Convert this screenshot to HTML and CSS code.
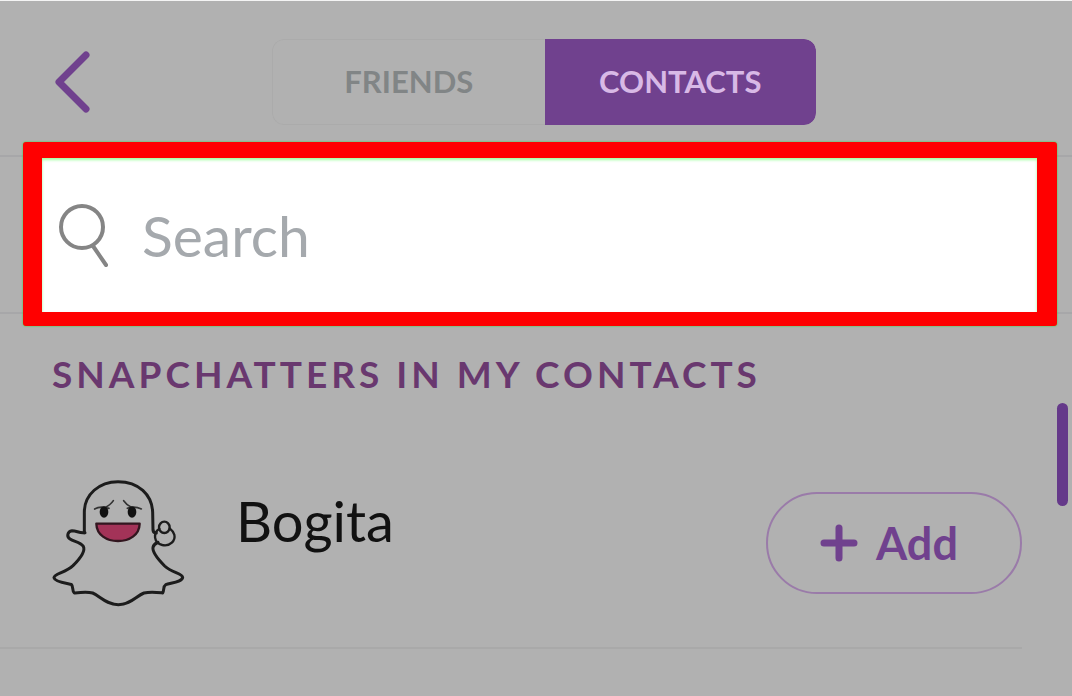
FILE: index.html
```html
<!DOCTYPE html>
<html lang="en">
<head>
  <meta charset="UTF-8" />
  <meta name="viewport" content="width=device-width, initial-scale=1.0"/>
  <title>Contacts</title>
  <link rel="stylesheet" href="styles.css">
</head>

<body>

  <header class="top-bar">
    <button class="back-button" type="button" aria-label="Back">
      <svg viewBox="0 0 38 64" class="back-icon">
        <path d="M33 5 L6 32 L33 59" />
      </svg>
    </button>
    <nav class="tabs">
      <button class="tab" type="button">FRIENDS</button>
      <button class="tab tab-active" type="button">CONTACTS</button>
    </nav>
  </header>

  <!-- Search row with the red highlight frame -->
  <div class="search-row">
    <label class="search-box">
      <svg viewBox="0 0 50 64" class="search-icon">
        <circle cx="24" cy="24" r="21" />
        <path d="M35 43 L48 62" />
      </svg>
      <input class="search-input" type="text" placeholder="Search" aria-label="Search" />
    </label>
  </div>

  <main class="contacts">
    <h2 class="section-title">SNAPCHATTERS IN MY CONTACTS</h2>

    <div class="contact">
      <svg viewBox="60 54 408 390" class="avatar">
        <!-- body -->
        <path class="line" d="M163 218 V157 C163 103 208 65 264 65 C326 65 366 104 368 157 L369 210 Q370 219 379 219" />
        <path class="line" d="M165 218 C148 221 141 212 126 212 C112 214 109 230 120 237 C133 245 151 246 160 259 C168 275 143 303 129 317 C106 339 73 341 72 353 C74 366 112 370 124 373 C131 380 125 391 133 399 C149 397 171 394 188 399 C211 409 229 434 265 434 C302 434 318 408 342 399 C363 394 382 397 398 399 C403 390 399 379 407 374 C426 368 457 365 458 352 C457 340 425 338 404 318 C390 304 366 279 369 262 C371 252 377 250 384 247" />
        <!-- hand -->
        <path class="line hand" d="M388 206 C369 219 370 248 397 255 C421 260 437 241 433 224 C431 215 424 209 419 205" />
        <ellipse class="line hand" cx="403" cy="202" rx="16" ry="17" />
        <!-- face -->
        <path class="brow" d="M194 147 Q210 137 237 145 M223 143 Q241 136 250 122 M281 122 Q291 136 304 142 M292 145 Q314 137 334 147" />
        <ellipse class="eye" cx="222" cy="156" rx="13" ry="17" />
        <ellipse class="eye" cx="306" cy="156" rx="13" ry="17" />
        <path class="mouth" d="M199 191 H329 C328 225 298 243 264 243 C230 243 200 225 199 191 Z" />
      </svg>
      <span class="name">Bogita</span>
      <button class="add-button" type="button">
        <svg viewBox="0 0 38 38" class="plus-icon">
          <path d="M19 4 V34 M4 19 H34" />
        </svg>
        Add
      </button>
    </div>
  </main>

  <div class="scroll-thumb"></div>

</body>
</html>
```
FILE: styles.css
```css
:root {
  --bg-color: #b1b1b1;
  --line-color: #a7a7a9;
  --purple: #70418e;
  --frame-color: #ff0000;
}

* {
  box-sizing: border-box;
}

body {
  margin: 0;
  min-height: 100vh;
  position: relative;
  border-top: 1px solid #f4f4f4;
  background-color: var(--bg-color);
  font-family: Lato, sans-serif;
  color: #111111;
}

button {
  border: none;
  background: none;
  padding: 0;
  font-family: inherit;
  cursor: pointer;
}

svg {
  display: block;
  fill: none;
  stroke-linecap: round;
  stroke-linejoin: round;
}

/* Top bar */
.top-bar {
  display: grid;
  grid-template-columns: 1fr 544px 1fr;
  align-items: center;
  padding: 38px 0 30px;
  border-bottom: 2px solid var(--line-color);
}

.back-button {
  justify-self: start;
  margin-left: 53px;
}

.back-icon {
  width: 38px;
  height: 64px;
  stroke: var(--purple);
  stroke-width: 7;
}

.tabs {
  display: flex;
  margin: 0 -8px 0 8px;
  border-radius: 12px;
  overflow: hidden;
}

.tab {
  flex: 1;
  height: 86px;
  padding-bottom: 2px;
  border: 1px solid #ababab;
  border-right: none;
  border-radius: 12px 0 0 12px;
  font-size: 31px;
  font-weight: 700;
  color: #818586;
}

.tab-active {
  border: none;
  border-radius: 0 12px 12px 0;
  background-color: var(--purple);
  color: #d8b9e6;
}

/* Search */
.search-row {
  border-bottom: 2px solid var(--line-color);
}

.search-box {
  position: relative;
  display: flex;
  align-items: center;
  gap: 34px;
  height: 184px;
  margin: -15px 15px -14px 23px;
  padding-left: 16px;
  border: 18px solid var(--frame-color);
  border-width: 16px 20px 14px 19px;
  border-radius: 3px;
  background-color: #ffffff;
  box-shadow: 0 0 2px #20e020, inset 0 2px 3px #a0ffa0;
}

.search-icon {
  width: 50px;
  height: 64px;
  stroke: #858585;
  stroke-width: 4;
}

.search-input {
  flex: 1;
  min-width: 0;
  padding: 0;
  border: none;
  outline: none;
  background: none;
  font-family: inherit;
  font-size: 57px;
  color: #111111;
}

.search-input::placeholder {
  color: #a5a9ad;
  opacity: 1;
}

/* Contact list */
.contacts {
  padding-top: 38px;
}

.section-title {
  margin: 0;
  padding-left: 52px;
  font-size: 37px;
  line-height: 44px;
  font-weight: 700;
  letter-spacing: 4px;
  color: #69386f;
}

.contact {
  display: flex;
  align-items: center;
  margin-right: 50px;
  padding: 82px 0 39px 50px;
  border-bottom: 2px solid #a9a9a9;
}

.avatar {
  width: 136px;
  height: 130px;
}

.line {
  stroke: #1c1c1c;
  stroke-width: 9;
}

.hand {
  stroke-width: 7;
}

.brow {
  stroke: #333333;
  stroke-width: 5;
}

.eye {
  fill: #111111;
}

.mouth {
  fill: #a33358;
  stroke: #32161f;
  stroke-width: 7;
}

.name {
  flex: 1;
  padding: 0 0 44px 50px;
  font-size: 56px;
  line-height: 64px;
}

.add-button {
  display: flex;
  align-items: center;
  justify-content: center;
  gap: 18px;
  width: 256px;
  height: 102px;
  padding-right: 10px;
  border: 2px solid #9a7ba9;
  border-radius: 51px;
  font-size: 45px;
  font-weight: 700;
  color: var(--purple);
}

.plus-icon {
  width: 38px;
  height: 38px;
  stroke: var(--purple);
  stroke-width: 7;
}

/* Scroll position marker */
.scroll-thumb {
  position: absolute;
  top: 402px;
  right: 4px;
  width: 11px;
  height: 103px;
  border-radius: 6px;
  background-color: #65398a;
}
```
